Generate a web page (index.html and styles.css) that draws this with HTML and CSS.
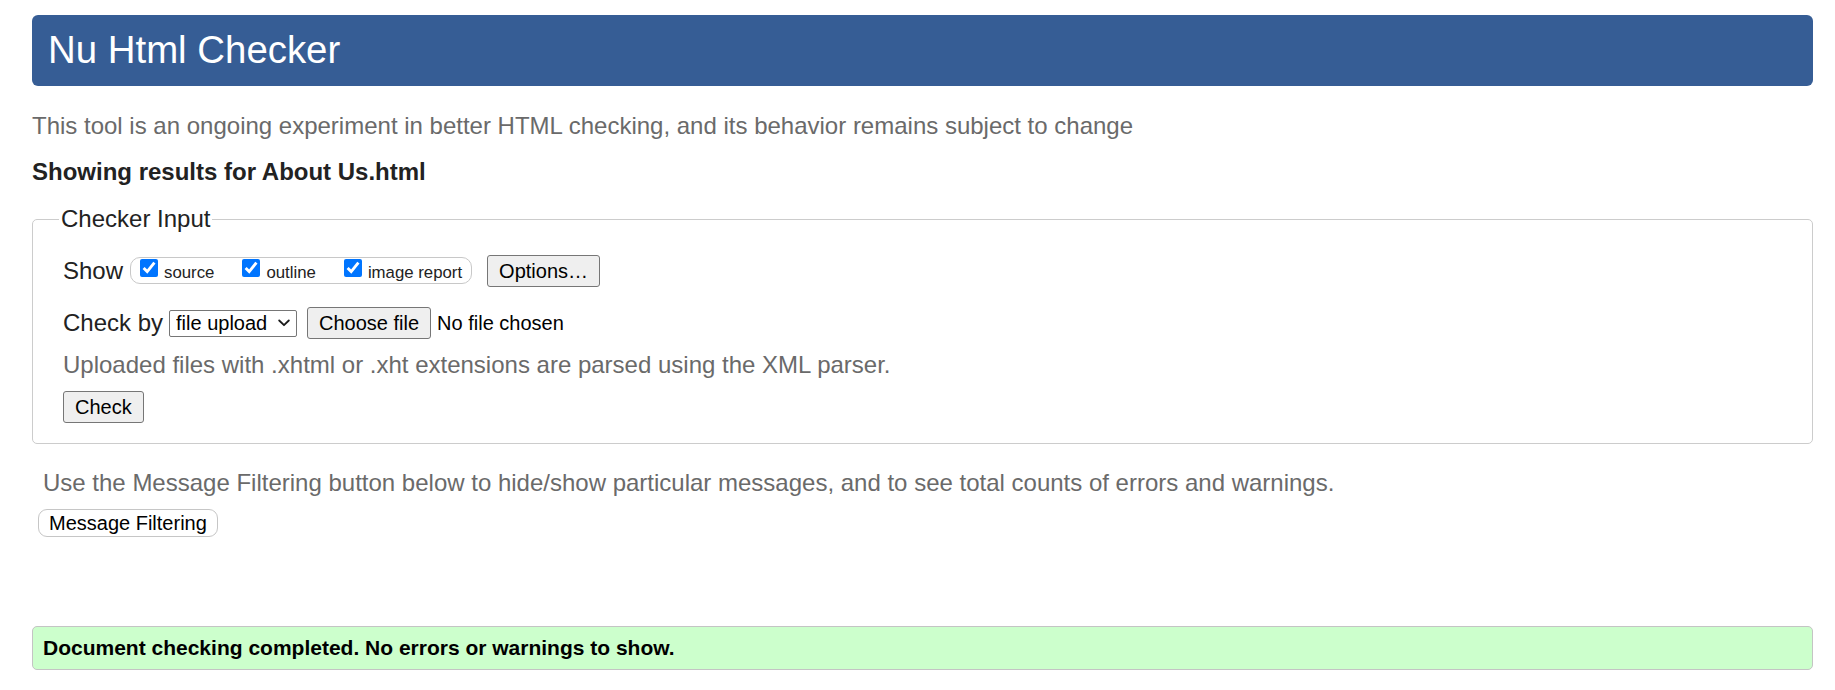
FILE: index.html
```html
<!DOCTYPE html>
<html lang="en">
<head>
<meta charset="utf-8">
<title>Showing results for About Us.html - Nu Html Checker</title>
<link rel="stylesheet" href="styles.css">
</head>
<body>
<h1 class="title">Nu Html Checker</h1>
<p class="intro">This tool is an ongoing experiment in better HTML checking, and its behavior remains subject to change</p>
<p class="showing">Showing results for About Us.html</p>
<form class="checker-form">
  <fieldset class="checker-input">
    <legend class="legend">Checker Input</legend>
    <div class="row show-row">
      <span class="row-label">Show</span>
      <span class="pill">
        <label class="opt"><input class="cb" type="checkbox" checked><span class="opt-text">source</span></label>
        <label class="opt"><input class="cb" type="checkbox" checked><span class="opt-text">outline</span></label>
        <label class="opt opt-last"><input class="cb" type="checkbox" checked><span class="opt-text">image report</span></label>
      </span>
      <button type="button" class="btn btn-options">Options…</button>
    </div>
    <div class="row checkby-row">
      <span class="row-label">Check by</span>
      <span class="select-wrap">
        <select class="select">
          <option>file upload</option>
          <option>address</option>
          <option>text input</option>
        </select>
        <svg class="chevron" width="12" height="8" viewBox="0 0 12 8"><path d="M1.2 1.5 L6 6.2 L10.8 1.5" fill="none" stroke="#1a1a1a" stroke-width="1.8" stroke-linecap="round" stroke-linejoin="round"/></svg>
      </span>
      <button type="button" class="btn btn-file">Choose file</button>
      <span class="file-status">No file chosen</span>
    </div>
    <p class="hint">Uploaded files with .xhtml or .xht extensions are parsed using the XML parser.</p>
    <div class="row submit-row">
      <button type="button" class="btn btn-check">Check</button>
    </div>
  </fieldset>
</form>
<div class="filters">
  <p class="filter-note">Use the Message Filtering button below to hide/show particular messages, and to see total counts of errors and warnings.</p>
  <button type="button" class="btn-filter">Message Filtering</button>
</div>
<p class="success">Document checking completed. No errors or warnings to show.</p>
</body>
</html>
```

FILE: styles.css
```css
html {
  background: #fff;
}

body {
  margin: 0;
  padding: 0 22px 20px 32px;
  font-family: "Liberation Sans", Arial, sans-serif;
  font-size: 24px;
  line-height: 28px;
  color: #222;
}

.title {
  margin: 15px 0 0;
  padding: 13px 16px 14px;
  background: #365d95;
  color: #fff;
  font-size: 38.4px;
  line-height: 44px;
  font-weight: normal;
  border-radius: 6px;
}

.intro {
  margin: 26px 0 0;
  color: #6a6a6a;
}

.showing {
  margin: 18px 0 0;
  font-weight: bold;
  color: #222;
}

.checker-form {
  margin: 0;
}

.checker-input {
  margin: 19px 0 0;
  padding: 22px 28px 20px 30px;
  border: 1px solid #cccccc;
  border-radius: 5px;
  min-width: 0;
}

.legend {
  padding: 0 2px;
  margin-left: -4px;
  font-size: 24px;
  line-height: 28px;
  color: #222;
}

.row {
  display: flex;
  align-items: center;
  height: 32px;
}

.checkby-row {
  margin-top: 20px;
}

.row-label {
  color: #222;
}

.pill {
  display: inline-flex;
  align-items: flex-start;
  box-sizing: border-box;
  height: 27px;
  margin-left: 7px;
  padding: 1px 9px 0;
  border: 1px solid #c8c8c8;
  border-radius: 10px;
  align-self: flex-start;
  margin-top: 2px;
}

.opt {
  display: flex;
  align-items: flex-start;
  margin-right: 28px;
  font-size: 16.8px;
  line-height: 19px;
  color: #222;
}

.opt-last {
  margin-right: 0;
}

.cb {
  width: 18px;
  height: 18px;
  margin: 0;
  accent-color: #0075ff;
}

.opt-text {
  margin: 4px 0 0 6px;
}

.btn {
  box-sizing: border-box;
  height: 32px;
  padding: 0 11px;
  border: 1px solid #767676;
  border-radius: 3px;
  background: #efefef;
  color: #000;
  font-family: "Liberation Sans", Arial, sans-serif;
  font-size: 20px;
  line-height: 23px;
}

.btn-options {
  margin-left: 15px;
}

.select-wrap {
  position: relative;
  display: inline-flex;
  margin-left: 6px;
}

.select {
  appearance: none;
  -webkit-appearance: none;
  box-sizing: border-box;
  width: 128px;
  height: 27px;
  margin: 0;
  padding: 0 0 0 6px;
  border: 1px solid #767676;
  border-radius: 2px;
  background: #fff;
  color: #000;
  font-family: "Liberation Sans", Arial, sans-serif;
  font-size: 20px;
}

.chevron {
  position: absolute;
  right: 7px;
  top: 9px;
  pointer-events: none;
}

.btn-file {
  margin-left: 10px;
}

.file-status {
  margin-left: 6px;
  font-size: 20px;
  color: #000;
}

.hint {
  margin: 12px 0 0;
  color: #6a6a6a;
}

.submit-row {
  margin-top: 12px;
}

.filters {
  padding-left: 11px;
}

.filter-note {
  margin: 25px 0 0;
  color: #6a6a6a;
}

.btn-filter {
  display: block;
  box-sizing: border-box;
  height: 28px;
  margin: 12px 0 0 -5px;
  padding: 0 10px;
  border: 1px solid #c6c6c6;
  border-radius: 9px;
  background: #fff;
  color: #000;
  font-family: "Liberation Sans", Arial, sans-serif;
  font-size: 20px;
  line-height: 23px;
}

.success {
  margin: 89px 0 0;
  padding: 9px 10px;
  border: 1px solid #c4c4c4;
  border-radius: 5px;
  background: #ccffcc;
  color: #000;
  font-size: 21px;
  line-height: 24px;
  font-weight: bold;
}
```
